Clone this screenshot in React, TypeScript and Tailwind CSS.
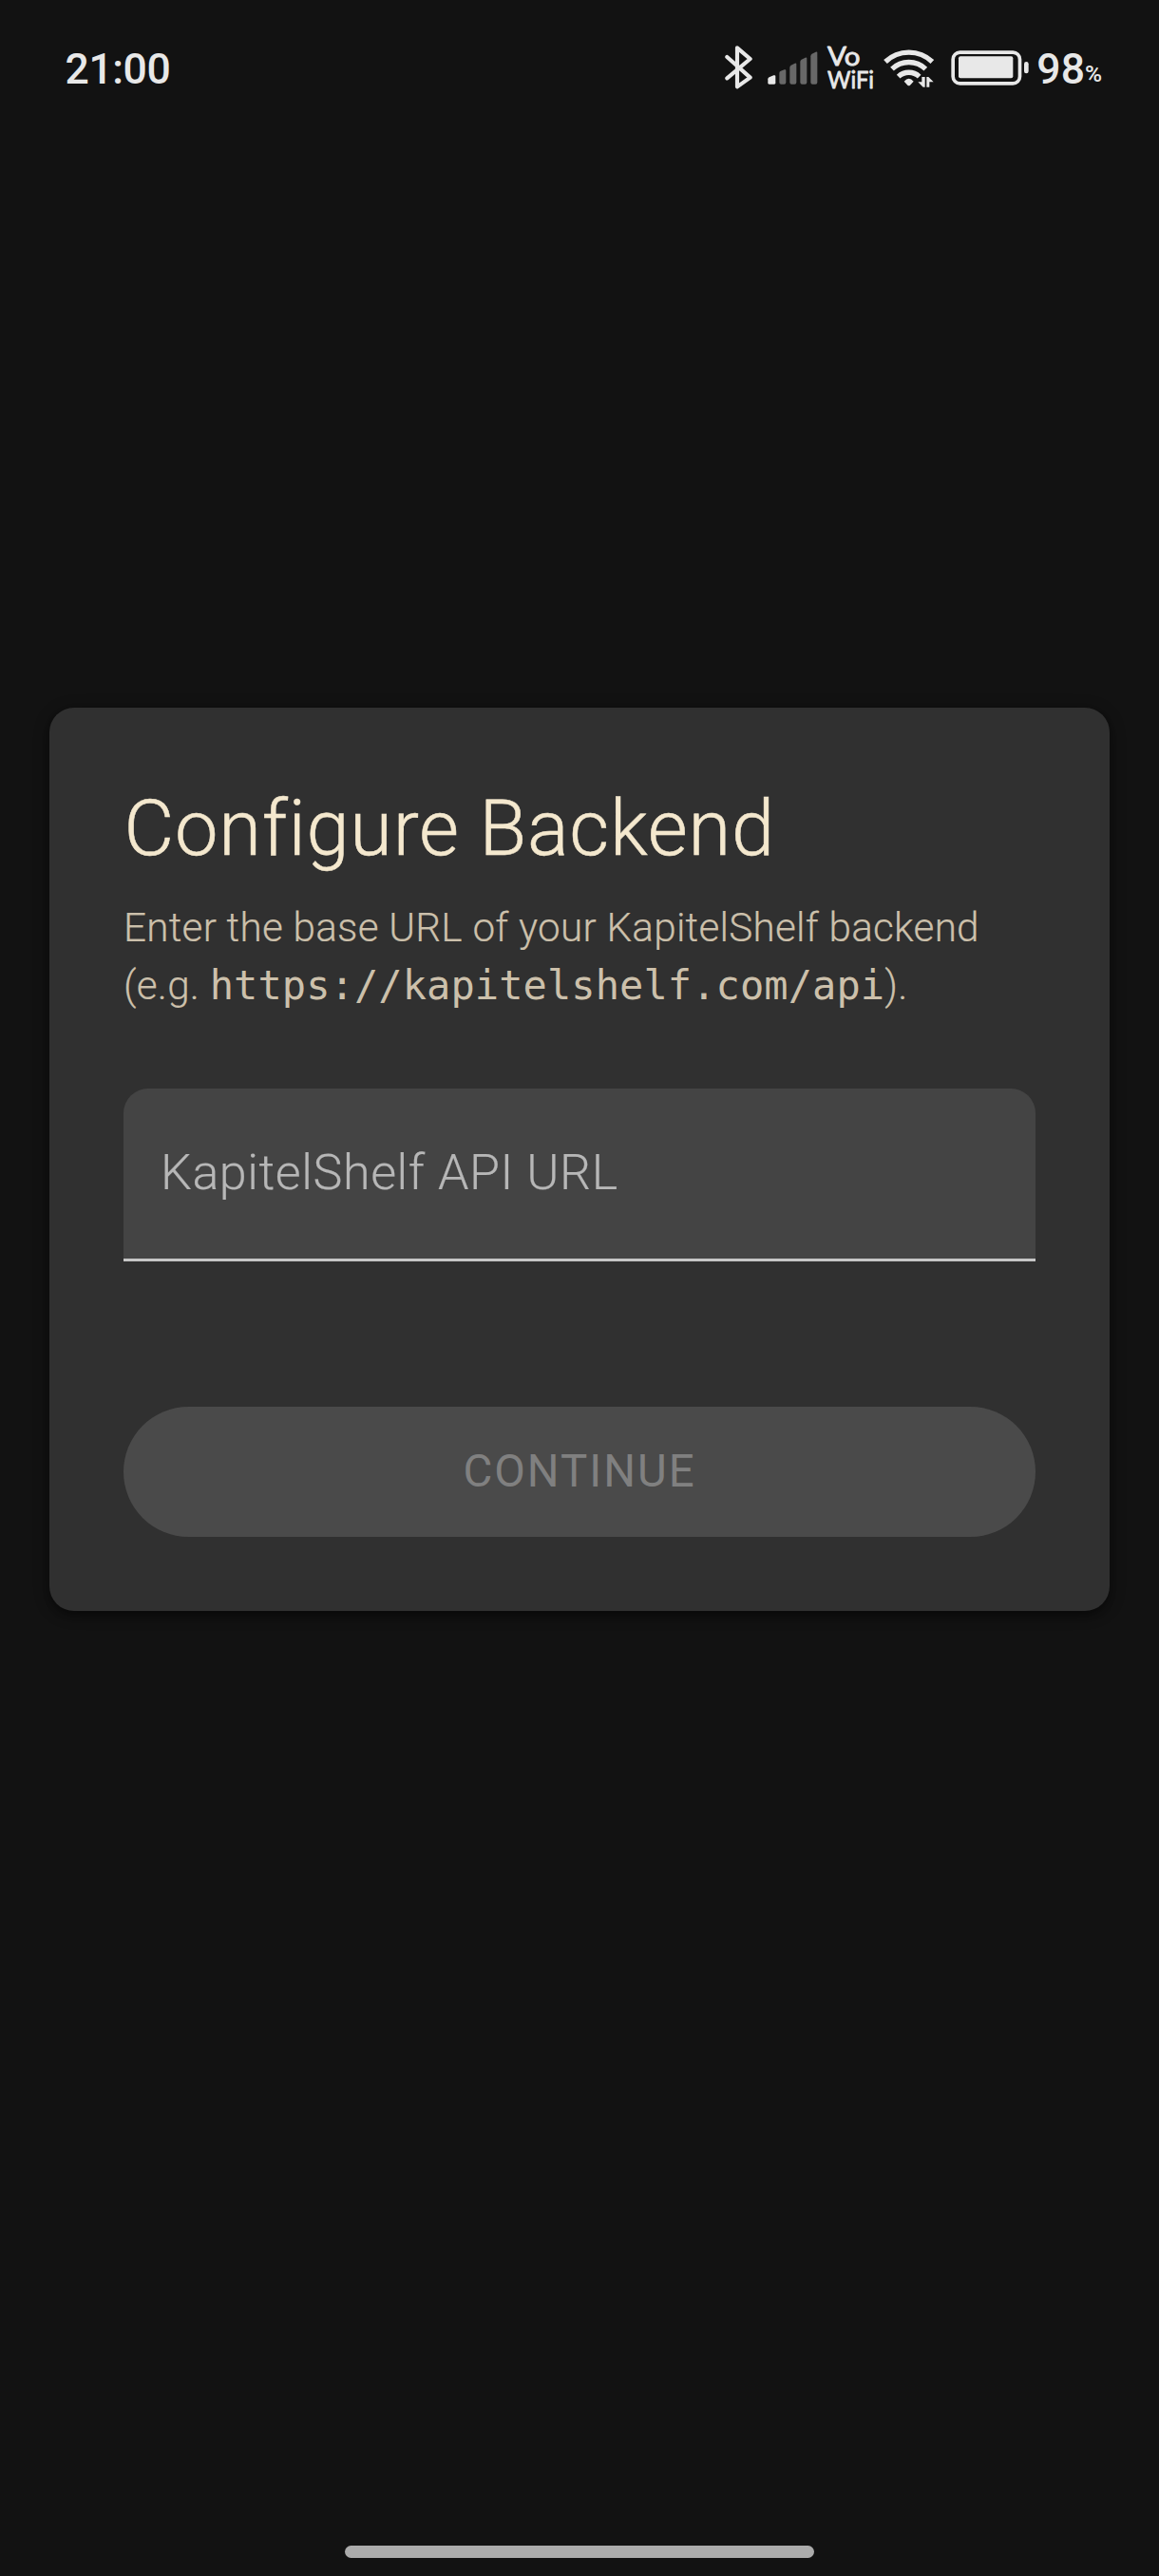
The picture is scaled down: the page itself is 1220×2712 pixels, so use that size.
import React from "react";

function BluetoothIcon() {
  return (
    <svg className="h-[46px] w-[29px]" viewBox="69 53 87 138" fill="none" stroke="#e8e8e8" strokeWidth="12.5" strokeLinecap="round" strokeLinejoin="round">
      <path d="M76 89 L149 154 L108 183 V60 L149 95 L76 156" />
    </svg>
  );
}

function SignalIcon() {
  return (
    <svg className="h-[35px] w-[53px]" viewBox="203 73 159 105" fill="#686868">
      <path fill="#e8e8e8" d="M204 161 Q204 157 208 155 L222 149 Q228 147 228 152 V173 Q228 177 224 177 H208 Q204 177 204 173 Z" />
      <path d="M240 142 Q240 138 243 136 L256 131 Q261 129 261 134 V171 Q261 177 255 177 H246 Q240 177 240 171 Z" />
      <path d="M273 124 Q273 119 277 117 L289 111 Q294 109 294 114 V171 Q294 177 288 177 H279 Q273 177 273 171 Z" />
      <path d="M306 106 Q306 101 310 99 L322 93 Q327 91 327 96 V171 Q327 177 321 177 H312 Q306 177 306 171 Z" />
      <path d="M339 89 Q339 83 343 81 L355 75 Q360 73 360 78 V171 Q360 177 354 177 H345 Q339 177 339 171 Z" />
    </svg>
  );
}

function VoWifiLabel() {
  return (
    <svg className="h-[48px] w-[50px] overflow-visible" viewBox="0 0 50 48" fill="#e8e8e8" stroke="#e8e8e8" strokeWidth="0.8" strokeLinejoin="round" fontFamily="Lato, sans-serif">
      <text x="1" y="20.500" fontSize="27" textLength="34.5" lengthAdjust="spacingAndGlyphs">Vo</text>
      <text x="1" y="44.500" fontSize="25" textLength="49" lengthAdjust="spacingAndGlyphs">WiFi</text>
    </svg>
  );
}

function WifiIcon() {
  return (
    <svg className="h-[41px] w-[54px]" viewBox="573 64 162 123" fill="none" stroke="#e8e8e8" strokeWidth="16">
      <path d="M579 106 A107 107 0 0 1 727 106" />
      <path d="M600 129 A76 76 0 0 1 706 129" />
      <path d="M620 153 A48 48 0 0 1 686 153" />
      <path d="M638 168 Q653 150 668 168 L657 180 Q653 184 649 180 Z" fill="#e8e8e8" stroke="none" />
      <path d="M704 154 V186 H698 L682 170 H694 V154 Z M709 186 V154 H715 L731 170 H718 V186 Z" fill="#e8e8e8" stroke="none" />
    </svg>
  );
}

function BatteryIcon() {
  return (
    <svg className="h-[37px] w-[83px]" viewBox="66 68 249 111">
      <rect x="72.500" y="74.500" width="211" height="98" rx="22" fill="none" stroke="#e8e8e8" strokeWidth="11" />
      <rect x="90" y="87" width="172" height="69" rx="6" fill="#e8e8e8" />
      <rect x="297" y="104" width="14" height="37" rx="7" fill="#e8e8e8" />
    </svg>
  );
}

function StatusBar() {
  return (
    <header className="flex h-[144px] items-start pl-[68.500px] pr-[60px] text-[#e8e8e8]">
      <time className="mt-[46px] text-[44.5px] leading-[54px] font-medium tracking-[-0.4px]">21:00</time>
      <div className="ml-auto flex items-start">
        <div className="mt-[47.500px] mr-[16px] flex"><BluetoothIcon /></div>
        <div className="mt-[54px] mr-[9px] flex"><SignalIcon /></div>
        <div className="mt-[48px] mr-[10.500px] flex"><VoWifiLabel /></div>
        <div className="mt-[51px] mr-[17px] flex"><WifiIcon /></div>
        <div className="mt-[53px] mr-[7px] flex"><BatteryIcon /></div>
        <div className="mt-[46px] flex items-baseline font-medium leading-[54px]">
          <span className="text-[44.5px]">98</span>
          <span className="-translate-y-[2px] text-[24.5px] leading-none">%</span>
        </div>
      </div>
    </header>
  );
}

function BackendCard() {
  return (
    <form
      className="flex h-[951px] flex-col rounded-[26px] bg-[#303030] px-[78px] pt-[79px] shadow-[0_6px_10px_-3px_rgba(0,0,0,0.3),0_3px_16px_0_rgba(0,0,0,0.4)]"
      onSubmit={(e) => e.preventDefault()}
    >
      <h1 className="pl-[0.5px] text-[81.25px] leading-[98.400px] font-light tracking-[0.76px] text-[#f4e8ce] [-webkit-text-stroke:0.5px]">
        Configure Backend
      </h1>
      <p className="mt-[25px] text-[42.25px] leading-[60.400px] font-light tracking-[0.23px] whitespace-nowrap text-[#ccc0ab] [-webkit-text-stroke:0.2px]">
        Enter the base URL of your KapitelShelf backend
        <br />
        (e.g. <code className="font-['DejaVu_Sans_Mono',monospace] text-[42px] leading-none tracking-[0.09px] [-webkit-text-stroke:0px]">https://kapitelshelf.com/api</code>).
      </p>
      <label className="mt-[77.800px] flex h-[182px] shrink-0 items-center rounded-t-[26px] border-b-[3px] border-[#c6c6c6] bg-[#444444] px-[39px] text-[52px] font-light tracking-[0.58px] text-[#b7b7b7] [-webkit-text-stroke:0.2px]">
        <span className="-mt-[1px]">KapitelShelf API URL</span>
      </label>
      <button type="submit" disabled className="mt-[153px] h-[137px] shrink-0 rounded-full bg-[#4a4a4a] pt-[1px] text-[47.400px] tracking-[2px] text-[#808080]">
        CONTINUE
      </button>
    </form>
  );
}

export default function App() {
  return (
    <div className="flex h-[2712px] w-[1220px] flex-col bg-[#121212] font-['Roboto',sans-serif]">
      <StatusBar />
      <main className="flex-1 px-[52px] pt-[601px]">
        <BackendCard />
      </main>
      <div className="mx-auto mb-[19px] h-[13px] w-[494px] rounded-full bg-[#ababab]" />
    </div>
  );
}
